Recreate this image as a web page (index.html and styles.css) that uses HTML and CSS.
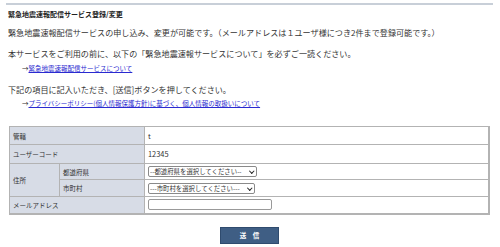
FILE: index.html
```html
<!DOCTYPE html>
<html lang="ja">
<head>
<meta charset="utf-8">
<title>緊急地震速報配信サービス登録/変更</title>
<link rel="stylesheet" href="styles.css">
</head>
<body>
<div class="rule"></div>
<div class="page">
  <h1 class="title">緊急地震速報配信サービス登録/変更</h1>
  <p class="lead">緊急地震速報配信サービスの申し込み、変更が可能です。（メールアドレスは１ユーザ様につき2件まで登録可能です。）</p>
  <p class="lead lead2">本サービスをご利用の前に、以下の「緊急地震速報サービスについて」を必ずご一読ください。</p>
  <p class="linkline">→<a href="#">緊急地震速報配信サービスについて</a></p>
  <p class="lead lead3">下記の項目に記入いただき、[送信]ボタンを押してください。</p>
  <p class="linkline">→<a href="#">プライバシーポリシー(個人情報保護方針)に基づく、個人情報の取扱いについて</a></p>

  <table class="form">
    <tr class="h18">
      <th colspan="2">管轄</th>
      <td class="val">t</td>
    </tr>
    <tr class="h19">
      <th colspan="2">ユーザーコード</th>
      <td class="val">12345</td>
    </tr>
    <tr class="h16">
      <th rowspan="2" class="addr">住所</th>
      <th class="sub">都道府県</th>
      <td><span class="selwrap sel1"><select class="sel"><option>--都道府県を選択してください--</option></select></span></td>
    </tr>
    <tr class="h17">
      <th class="sub">市町村</th>
      <td><span class="selwrap sel2"><select class="sel"><option>---市町村を選択してください---</option></select></span></td>
    </tr>
    <tr class="h17">
      <th colspan="2">メールアドレス</th>
      <td><input class="mail" type="text"></td>
    </tr>
  </table>

  <div class="actions">
    <button class="send" type="button">送　信</button>
  </div>
</div>
</body>
</html>
```

FILE: styles.css
```css
html, body {
  margin: 0;
  padding: 0;
  background: #ffffff;
}
body {
  font-family: "Noto Sans CJK JP", "Noto Sans", sans-serif;
  color: #333333;
}
.rule {
  height: 2px;
  margin: 3px 7px 0 6px;
  background: #c8cfd8;
}
.page {
  padding: 0 8px;
}
.title {
  margin: 4px 0 0 0;
  font-size: 7px;
  line-height: 10px;
  font-weight: bold;
  color: #222222;
}
.lead {
  margin: 8px 0 0 0;
  font-size: 8.1px;
  line-height: 12px;
}
.lead2 {
  margin-top: 9px;
}
.lead3 {
  margin-top: 11px;
}
.linkline {
  margin: 3px 0 0 14px;
  font-size: 6.5px;
  line-height: 10px;
  color: #333333;
}
.lead3 + .linkline {
  margin-top: 2px;
}
.linkline a {
  color: #2a2ad0;
  text-decoration: underline;
}
.form {
  margin: 18px 0 0 1px;
  width: 481px;
  border-collapse: collapse;
  border-right: 2px solid #b3b3b3;
  border-bottom: 2px solid #b3b3b3;
}
.form th, .form td {
  border: 1px solid #b3b3b3;
  padding: 0 3px;
  font-size: 6.5px;
  text-align: left;
  vertical-align: middle;
}
.form th {
  background: #d7dce6;
  font-weight: normal;
  color: #333333;
  width: 128px;
}
.form th.addr {
  width: 43px;
}
.form th.sub {
  width: 78px;
}
.form td {
  background: #ffffff;
}
.form td.val {
  font-size: 7.4px;
  vertical-align: top;
  padding-top: 3px;
}
.h18 { height: 18px; }
.h19 { height: 19px; }
.h16 { height: 16px; }
.h17 { height: 17px; }
.selwrap {
  position: relative;
  display: block;
  height: 11px;
}
.sel1 { width: 109px; }
.sel2 { width: 107px; }
.selwrap::after {
  content: "";
  position: absolute;
  right: 4px;
  top: 3px;
  width: 2.5px;
  height: 2.5px;
  border-right: 1.2px solid #222222;
  border-bottom: 1.2px solid #222222;
  transform: rotate(45deg);
  pointer-events: none;
}
.sel {
  -webkit-appearance: none;
  appearance: none;
  display: block;
  width: 100%;
  height: 11px;
  box-sizing: border-box;
  margin: 0;
  padding: 0 10px 0 1px;
  font-family: "Noto Sans CJK JP", sans-serif;
  font-size: 6.4px;
  line-height: 9px;
  color: #333333;
  border: 1px solid #8a8a8a;
  border-radius: 2px;
  background: #ffffff;
}
.mail {
  display: block;
  width: 124px;
  height: 11px;
  box-sizing: border-box;
  padding: 0;
  border: 1px solid #999999;
  border-radius: 2px;
  background: #ffffff;
}
.actions {
  display: flex;
  justify-content: center;
  width: 483px;
  margin-top: 12px;
}
.send {
  width: 59px;
  height: 17px;
  padding: 0;
  background: #3f5e84;
  border: 1px solid #2f4b6e;
  color: #ffffff;
  font-family: "Noto Sans CJK JP", sans-serif;
  font-size: 6.5px;
  font-weight: bold;
  line-height: 15px;
}
```
